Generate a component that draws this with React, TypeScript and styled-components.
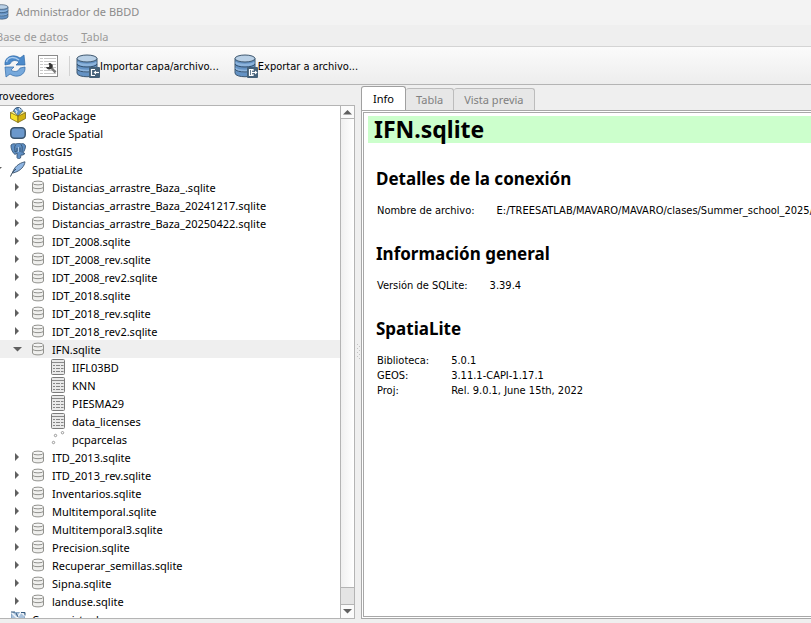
import React from "react";
import styled, { createGlobalStyle } from "styled-components";

const dialogFont = `"DejaVu Sans Condensed", "Noto Sans", sans-serif`;

const GlobalStyle = createGlobalStyle`
  * { box-sizing: border-box; }
  body {
    margin: 0;
    overflow: hidden;
    background: #efefef;
    color: #000;
    font-family: "Noto Sans", sans-serif;
    font-size: 11px;
  }
  button { font: inherit; color: inherit; margin: 0; padding: 0; border: 0; background: none; }
`;

/* The window runs a little past the left edge of the screen. */
const Window = styled.div`
  display: flex;
  flex-direction: column;
  height: 100vh;
  margin-left: -8px;
`;

const TitleBar = styled.header`
  display: flex;
  align-items: center;
  gap: 6px;
  height: 25px;
  padding: 0 0 2px 2px;
  background: #f3f3f3;
  color: #8c8c8c;
`;

const MenuBar = styled.nav`
  display: flex;
  gap: 13px;
  height: 21px;
  padding: 0 4px;
  background: #efefef;
  color: #9a9a9a;
`;

const MenuButton = styled.button`
  line-height: 24px;
`;

const Toolbar = styled.div`
  display: flex;
  align-items: center;
  height: 39px;
  padding-left: 11px;
  border-top: 1px solid #d4d4d4;
  border-bottom: 1px solid #b4b4b4;
  background: linear-gradient(#fbfbfb, #ededed);
`;

const IconButton = styled.button`
  display: flex;
  width: 24px;
  margin-right: 9px;
`;

const Separator = styled.span`
  width: 1px;
  height: 20px;
  margin-right: 6px;
  background: #d2d2d2;
`;

const ToolButton = styled.button`
  display: flex;
  align-items: center;
  margin-right: 15px;
  font-family: ${dialogFont};
  line-height: 24px;
  white-space: nowrap;
  span { padding-top: 2px; }
`;

const Body = styled.main`
  display: flex;
  flex: 1;
  min-height: 0;
  padding-bottom: 4px;
`;

const Providers = styled.section`
  display: flex;
  flex-direction: column;
  flex: 0 0 363px;
  min-height: 0;
`;

const ProvidersTitle = styled.h2`
  height: 20px;
  margin: 0;
  padding-left: 1px;
  font-family: ${dialogFont};
  font-size: 11px;
  font-weight: 400;
  line-height: 24px;
`;

const TreeFrame = styled.div`
  display: flex;
  flex: 1;
  min-height: 0;
  border: 1px solid #b4b4b4;
  background: #fff;
`;

const Tree = styled.ul`
  flex: 1;
  margin: 0 0 0 -3px;
  padding: 0;
  overflow: hidden;
  list-style: none;
`;

const Row = styled.li<{ $level: number; $selected?: boolean }>`
  display: flex;
  align-items: center;
  gap: 6px;
  height: 18px;
  padding-left: ${(p) => p.$level * 20}px;
  background: ${(p) => (p.$selected ? "#efefef" : "transparent")};
  white-space: nowrap;
`;

const Expander = styled.span`
  display: flex;
  justify-content: center;
  width: 14px;
  flex: none;
`;

const ScrollBar = styled.div`
  display: flex;
  flex-direction: column;
  width: 14px;
  border-left: 1px solid #b4b4b4;
  background: linear-gradient(90deg, #f0f0f0, #fff);
`;

const ScrollButton = styled.button<{ $end?: boolean }>`
  display: flex;
  align-items: center;
  justify-content: center;
  height: 13px;
  background: #fbfbfb;
  border-bottom: ${(p) => (p.$end ? "0" : "1px solid #b4b4b4")};
`;

const ScrollTrack = styled.div`
  flex: 1;
`;

const ScrollThumb = styled.div`
  height: 18px;
  border: solid #b4b4b4;
  border-width: 1px 0;
  background: #e4e4e4;
`;

const Splitter = styled.div`
  display: flex;
  align-items: center;
  justify-content: center;
  width: 6px;
`;

const Details = styled.section`
  display: flex;
  flex: 1;
  flex-direction: column;
  min-width: 0;
  padding-top: 1px;
`;

const Tabs = styled.div`
  display: flex;
  align-items: flex-end;
  height: 24px;
`;

const Tab = styled.button<{ $active?: boolean }>`
  height: ${(p) => (p.$active ? 25 : 22)}px;
  margin-bottom: ${(p) => (p.$active ? -1 : 0)}px;
  padding: 0 ${(p) => (p.$active ? 11 : 10)}px;
  border: 1px solid ${(p) => (p.$active ? "#a0a0a0" : "#bcbcbc")};
  border-left-width: ${(p) => (p.$active ? 1 : 0)}px;
  border-bottom: 0;
  border-radius: 3px 3px 0 0;
  background: ${(p) => (p.$active ? "#fff" : "#e7e7e7")};
  color: ${(p) => (p.$active ? "#000" : "#808080")};
  line-height: 22px;
  white-space: nowrap;
`;

const Panel = styled.div`
  flex: 1;
  min-height: 0;
  padding: 1px 0 1px 1px;
  border: 1px solid #a8a8a8;
  border-right: 0;
  background: #fff;
`;

const Page = styled.article`
  height: 100%;
  padding: 3px 0 0 4px;
  border: 1px solid #a8a8a8;
  border-right: 0;
  overflow: hidden;
`;

const PageTitle = styled.h1`
  height: 27px;
  margin: 0;
  padding-left: 6px;
  background: #ccffcc;
  font-size: 23px;
  line-height: 27px;
`;

const SectionTitle = styled.h2`
  margin: 24px 0 0 8px;
  font-size: 17px;
  line-height: 24px;
`;

const Facts = styled.table`
  margin: 12px 0 24px 9px;
  border-collapse: collapse;
  font-family: ${dialogFont};
  line-height: 15px;
  white-space: nowrap;
  th { padding: 0 22px 0 0; font-weight: 400; text-align: left; }
  td { padding: 0; }
`;

const Cylinder = ({ size = 24, badge }: { size?: number; badge?: "in" | "out" }) => (
  <svg width={size} height={size} viewBox="0 0 24 24" aria-hidden="true">
    <path d="M1 4.5v14.500C1 24 21 24 21 19v-14.500z" fill="#6492c4" stroke="#3f5870" />
    <path d="M1.500 7.500v2c2 4 17 4 19 0v-2c-3 3-16 3-19 0zm0 6v2c2 4 17 4 19 0v-2c-3 3-16 3-19 0z" fill="#8db4dc" />
    <path d="M1 10c1 4 19 4 20 0M1 15c1 4 19 4 20 0" fill="none" stroke="#34516f" />
    <ellipse cx="11" cy="4.500" rx="10" ry="3.500" fill="#b9d0e6" stroke="#3f5870" />
    {badge && (
      <>
        <rect x="13" y="13" width="11" height="11" rx="1" fill="#456179" />
        {badge === "in" ? (
          <>
            <path d="M19 15.500h-3.500v6H19" fill="none" stroke="#fff" strokeWidth="1.200" />
            <path d="M23 18.500h-4" stroke="#fff" strokeWidth="1.200" />
            <path d="M17.500 18.500l2.500-2v4z" fill="#fff" />
          </>
        ) : (
          <>
            <path d="M19 17v-1.500h-3.500v6H19V20M17.500 15.500v6" fill="none" stroke="#fff" strokeWidth="1.200" />
            <path d="M18 18.500h3" stroke="#fff" strokeWidth="1.200" />
            <path d="M23.500 18.500l-2.500-2v4z" fill="#fff" />
          </>
        )}
      </>
    )}
  </svg>
);

const RefreshIcon = () => (
  <svg width="24" height="24" viewBox="0 0 24 24" aria-hidden="true">
    <path d="M2 11C1 3 10-1 17 4l4-3 1 10h-9l3-3C12 5 8 7 7 10z" fill="#4b8acb" stroke="#2e68a8" strokeWidth=".7" />
    <path d="M22 13c1 8-8 12-15 7l-4 3-1-10h9l-3 3c4 3 8 1 9-2z" fill="#77a9dc" stroke="#2e68a8" strokeWidth=".7" />
    <path d="M3.500 8C5 3 11 2 16 6" fill="none" stroke="#a9cbee" strokeWidth="1.500" />
  </svg>
);

const QueryIcon = () => (
  <svg width="24" height="24" viewBox="0 0 24 24" aria-hidden="true">
    <rect x="2.500" y="1.500" width="19" height="21" fill="#fff" stroke="#8a8a8a" />
    <path d="M4 4.500h3m1 0h12M4 7.500h3m1 0h12M4 10.500h3m1 0h12M4 13.500h3m1 0h12M4 16.500h3m1 0h12M4 19.500h3m1 0h12" stroke="#c8c8c8" />
    <path d="M15.500 14l4 4.500" stroke="#777" strokeWidth="2.500" />
    <path d="M13 9.500c4-.5 4 4 2 5-1.500 1-3.500.5-4.500-.8l2.500-.2 1-1.500z" fill="#333" stroke="#333" strokeWidth="1" />
  </svg>
);

const GeoPackageIcon = () => (
  <svg width="16" height="16" viewBox="0 0 16 16" aria-hidden="true">
    <circle cx="8" cy="5" r="4.500" fill="#5c8fc4" stroke="#34516f" />
    <path d="M5 2.500l2 2-1 2M9 1l1 2 2 0" fill="none" stroke="#dce9f5" strokeWidth="1.200" />
    <path d="M.5 5.500 8 9v6.500l-7.500-4z" fill="#f5e028" stroke="#7b6a16" strokeWidth=".8" />
    <path d="M15.500 5.500 8 9v6.500l7.500-4z" fill="#d2b211" stroke="#7b6a16" strokeWidth=".8" />
    <path d="M.5 5.500 3.500 4.500 8 9zM15.500 5.500 12.500 4.500 8 9z" fill="#fff6a0" stroke="#7b6a16" strokeWidth=".5" />
  </svg>
);

const OracleIcon = () => (
  <svg width="16" height="16" viewBox="0 0 16 16" aria-hidden="true">
    <rect x=".8" y="2.800" width="14.400" height="10.400" rx="3.500" fill="#6b98cc" stroke="#3a546e" strokeWidth="1.500" />
  </svg>
);

const PostgisIcon = () => (
  <svg width="16" height="16" viewBox="0 0 16 16" aria-hidden="true">
    <path d="M1 2C3 0 5 1 6 1c2-1 4-1 5 0 2-1 4 0 4.500 2 0 3-1.500 5-2.500 7l2 .5-2 1.500h-2l-.5 3c-1 1-3 1-3.500-.5L7 10l-2 1.500C2.500 10 .5 5 1 2z" fill="#5f8fc4" stroke="#3a5878" strokeWidth=".9" />
    <path d="M5.500 2C4 4 5 7 5 9l2-1V5M11 1.500c2 2 1 5 1 8M10 4.500V9" fill="none" stroke="#34516f" strokeWidth=".9" />
    <path d="M8.500 4v5" stroke="#a9c7e6" />
  </svg>
);

const FeatherIcon = () => (
  <svg width="16" height="16" viewBox="0 0 16 16" aria-hidden="true">
    <path d="M2.500 12C4 6 9 2 15 .8 14.500 5 11 10 3 12z" fill="#8fb6e3" stroke="#3b546d" strokeWidth=".9" />
    <path d="M.5 15.500C2 12 3 10 6 8" fill="none" stroke="#2f455b" />
  </svg>
);

const DatabaseIcon = () => (
  <svg width="16" height="16" viewBox="0 0 16 16" aria-hidden="true">
    <path d="M2.500 4v8c0 2.500 11 2.500 11 0V4" fill="#efefed" stroke="#92928e" />
    <path d="M2.500 8c0 2.200 11 2.200 11 0" fill="none" stroke="#92928e" />
    <ellipse cx="8" cy="4" rx="5.500" ry="1.900" fill="#f6f6f5" stroke="#92928e" />
  </svg>
);

const TableIcon = () => (
  <svg width="16" height="16" viewBox="0 0 16 16" aria-hidden="true">
    <rect x="1.500" y=".5" width="13" height="15" rx="1" fill="#e9e9e9" stroke="#7c7c7c" />
    <path d="M2 3.500h12" stroke="#8a8a8a" />
    <path d="M3 6.500h2m1 0h4m1 0h2.500M3 9.500h2m1 0h4m1 0h2.500M3 12.500h2m1 0h4m1 0h2.500" stroke="#858585" />
  </svg>
);

const PointsIcon = () => (
  <svg width="16" height="16" viewBox="0 0 16 16" fill="#fff" stroke="#8f8f8f" strokeWidth=".9" aria-hidden="true">
    <circle cx="3.500" cy="11.500" r="1.200" />
    <circle cx="5.500" cy="4.500" r="1.200" />
    <circle cx="12.500" cy="1.700" r="1.200" />
  </svg>
);

const VirtualIcon = () => (
  <svg width="16" height="16" viewBox="0 0 16 16" aria-hidden="true">
    <rect x="1.500" y="1.500" width="13" height="13" fill="#a9c2dc" stroke="#8aa8c6" />
    <path d="M1 1l6 6 4-6 4 4" fill="none" stroke="#f2f6fa" strokeWidth="1.500" />
    <path d="M1 1h4M6 2l2 4M11 1.500h4v3" fill="none" stroke="#35587c" />
  </svg>
);

const Arrow = ({ dir }: { dir: "right" | "down" | "up" }) => (
  <svg width="9" height="9" viewBox="0 0 9 9" fill="#606060" aria-hidden="true">
    <path d={{ right: "M2 0v8l4-4z", down: "M0 2h9L4.500 6.500z", up: "M0 6.500h9L4.500 2z" }[dir]} />
  </svg>
);

const icons = {
  gpkg: GeoPackageIcon,
  oracle: OracleIcon,
  postgis: PostgisIcon,
  spatialite: FeatherIcon,
  db: DatabaseIcon,
  table: TableIcon,
  points: PointsIcon,
  virtual: VirtualIcon,
};

type Item = { name: string; icon: keyof typeof icons; level: number; open?: boolean };

const db = (name: string, open = false): Item => ({ name: `${name}.sqlite`, icon: "db", level: 1, open });
const layer = (name: string, icon: keyof typeof icons = "table"): Item => ({ name, icon, level: 2 });

const items: Item[] = [
  { name: "GeoPackage", icon: "gpkg", level: 0 },
  { name: "Oracle Spatial", icon: "oracle", level: 0 },
  { name: "PostGIS", icon: "postgis", level: 0 },
  { name: "SpatiaLite", icon: "spatialite", level: 0, open: true },
  ...["Distancias_arrastre_Baza_", "Distancias_arrastre_Baza_20241217", "Distancias_arrastre_Baza_20250422",
    "IDT_2008", "IDT_2008_rev", "IDT_2008_rev2", "IDT_2018", "IDT_2018_rev", "IDT_2018_rev2"].map((n) => db(n)),
  db("IFN", true),
  layer("IIFL03BD"),
  layer("KNN"),
  layer("PIESMA29"),
  layer("data_licenses"),
  layer("pcparcelas", "points"),
  ...["ITD_2013", "ITD_2013_rev", "Inventarios", "Multitemporal", "Multitemporal3", "Precision",
    "Recuperar_semillas", "Sipna", "landuse"].map((n) => db(n)),
  { name: "Capas virtuales", icon: "virtual", level: 0 },
];

const sections = [
  { title: "Detalles de la conexión", rows: [["Nombre de archivo:", "E:/TREESATLAB/MAVARO/MAVARO/clases/Summer_school_2025/"]] },
  { title: "Información general", rows: [["Versión de SQLite:", "3.39.4"]] },
  { title: "SpatiaLite", rows: [["Biblioteca:", "5.0.1"], ["GEOS:", "3.11.1-CAPI-1.17.1"], ["Proj:", "Rel. 9.0.1, June 15th, 2022"]] },
];

export default function App() {
  return (
    <>
      <GlobalStyle />
      <Window>
        <TitleBar>
          <Cylinder size={16} />
          Administrador de BBDD
        </TitleBar>
        <MenuBar>
          <MenuButton>Base de <u>d</u>atos</MenuButton>
          <MenuButton><u>T</u>abla</MenuButton>
        </MenuBar>
        <Toolbar>
          <IconButton aria-label="Actualizar"><RefreshIcon /></IconButton>
          <IconButton aria-label="Ventana SQL"><QueryIcon /></IconButton>
          <Separator />
          <ToolButton><Cylinder badge="in" /><span>Importar capa/archivo...</span></ToolButton>
          <ToolButton><Cylinder badge="out" /><span>Exportar a archivo...</span></ToolButton>
        </Toolbar>
        <Body>
          <Providers>
            <ProvidersTitle>Proveedores</ProvidersTitle>
            <TreeFrame>
              <Tree role="tree">
                {items.map((item) => {
                  const Icon = icons[item.icon];
                  return (
                    <Row key={item.name} role="treeitem" $level={item.level} $selected={item.name === "IFN.sqlite"}>
                      <Expander>
                        {(item.icon === "db" || item.open) && <Arrow dir={item.open ? "down" : "right"} />}
                      </Expander>
                      <Icon />
                      <span>{item.name}</span>
                    </Row>
                  );
                })}
              </Tree>
              <ScrollBar>
                <ScrollButton aria-label="Subir"><Arrow dir="up" /></ScrollButton>
                <ScrollTrack />
                <ScrollThumb />
                <ScrollButton $end aria-label="Bajar"><Arrow dir="down" /></ScrollButton>
              </ScrollBar>
            </TreeFrame>
          </Providers>
          <Splitter>
            <svg width="3" height="16" viewBox="0 0 3 16" fill="#c4c4c4" aria-hidden="true">
              <path d="M0 0h1v1H0zM2 2h1v1H2zM0 4h1v1H0zM2 6h1v1H2zM0 8h1v1H0zM2 10h1v1H2zM0 12h1v1H0zM2 14h1v1H2z" />
            </svg>
          </Splitter>
          <Details>
            <Tabs role="tablist">
              <Tab role="tab" aria-selected="true" $active>Info</Tab>
              <Tab role="tab">Tabla</Tab>
              <Tab role="tab">Vista previa</Tab>
            </Tabs>
            <Panel role="tabpanel">
              <Page>
                <PageTitle>IFN.sqlite</PageTitle>
                {sections.map((s) => (
                  <React.Fragment key={s.title}>
                    <SectionTitle>{s.title}</SectionTitle>
                    <Facts>
                      <tbody>
                        {s.rows.map(([label, value]) => (
                          <tr key={label}>
                            <th scope="row">{label}</th>
                            <td>{value}</td>
                          </tr>
                        ))}
                      </tbody>
                    </Facts>
                  </React.Fragment>
                ))}
              </Page>
            </Panel>
          </Details>
        </Body>
      </Window>
    </>
  );
}
